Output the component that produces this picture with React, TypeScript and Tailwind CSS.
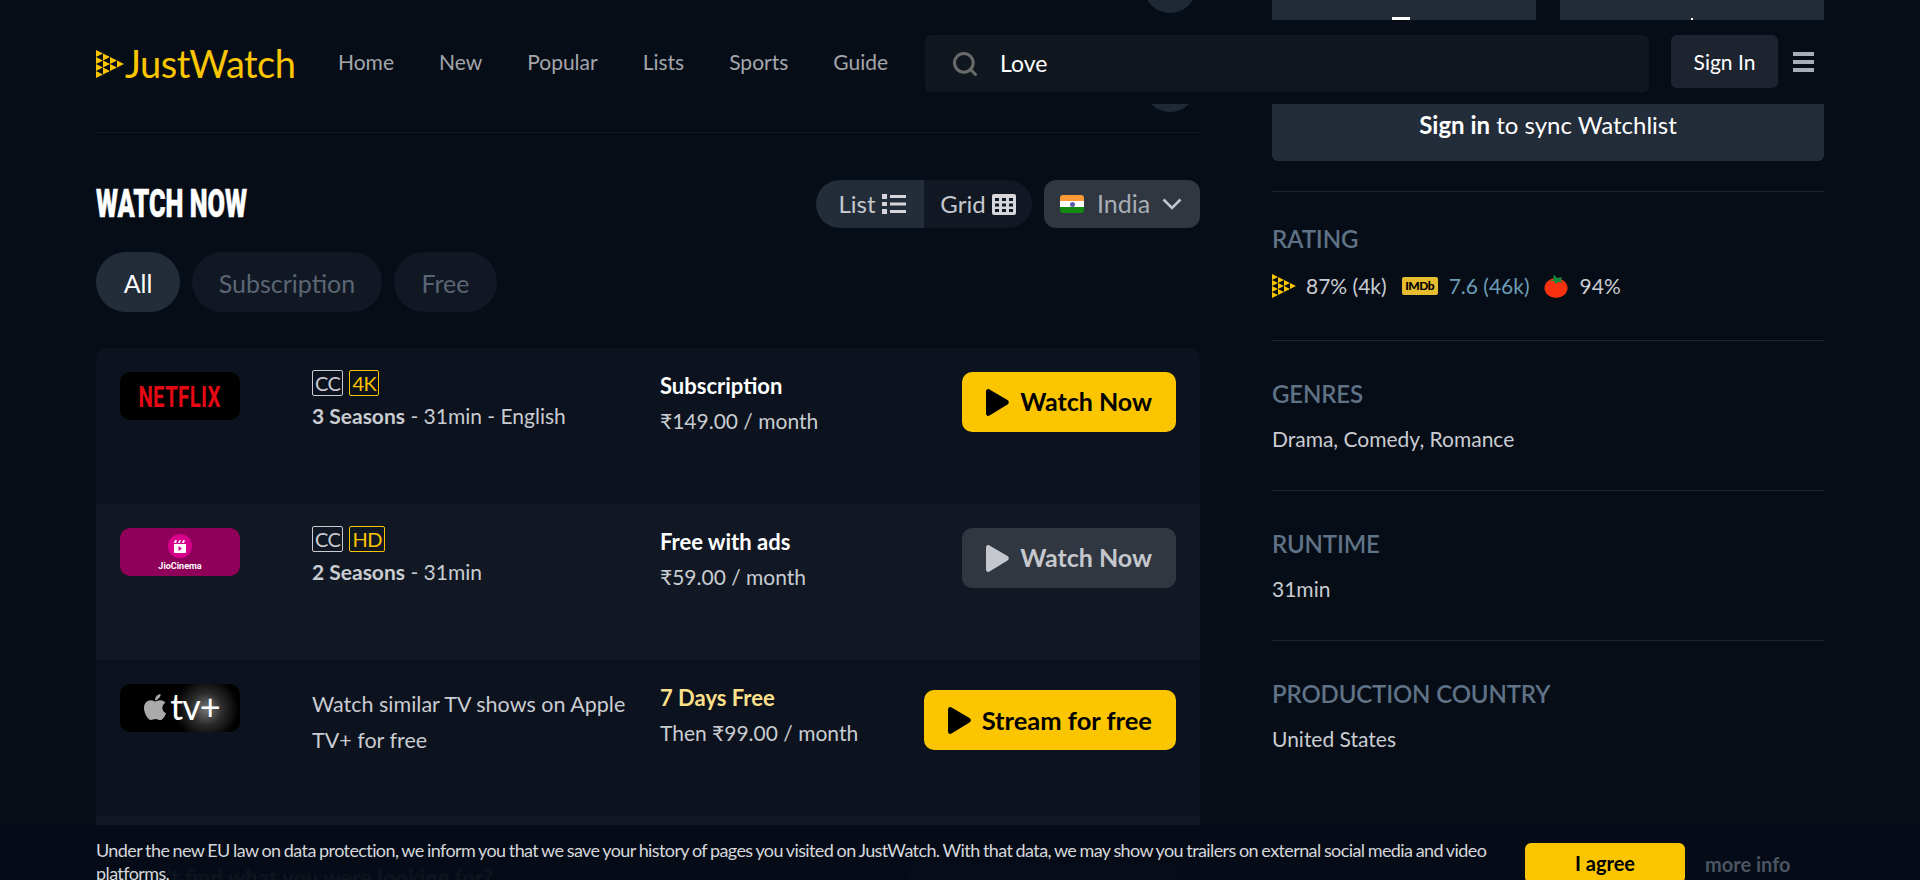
import { Search } from 'lucide-react';
import { FaApple } from 'react-icons/fa';

function BrandMark({ size = 28 }: { size?: number }) {
  // stacked triangles of the JustWatch play mark
  const tris = [
    [0, 0], [0, 7], [0, 14], [0, 21],
    [7, 3.5], [7, 10.5], [7, 17.5],
    [14, 7], [14, 14],
    [21, 10.5],
  ];
  return (
    <svg width={size} height={size} viewBox="0 0 28 28" className="shrink-0">
      {tris.map(([x, y]) => (
        <path key={`${x}-${y}`} d={`M${x} ${y}l7 3.500-7 3.500z`} fill="#fbc500" />
      ))}
    </svg>
  );
}

function PlayIcon({ className }: { className: string }) {
  return (
    <svg width="23" height="27" viewBox="0 0 23 27" className={className}>
      <path d="M0 2.500C0 .5 1.800-.5 3.500.5l18 10.500c1.700 1 1.700 3.600 0 4.600l-18 10.900C1.800 27.500 0 26.500 0 24.500z" fill="currentColor" />
    </svg>
  );
}

function ListIcon() {
  return (
    <svg width="24" height="20" viewBox="0 0 24 20" className="text-[#d5d5db]">
      <path d="M0 0h5v5H0zM0 8h5v4H0zM0 15h5v5H0zM8 1h16v3H8zM8 8.500h16v3H8zM8 16h16v3H8z" fill="currentColor" />
    </svg>
  );
}

function GridIcon() {
  return (
    <svg width="24" height="21" viewBox="0 0 24 21" className="text-[#d5d5db]">
      <path
        fillRule="evenodd"
        d="M2 0h20a2 2 0 0 1 2 2v17a2 2 0 0 1-2 2H2a2 2 0 0 1-2-2V2a2 2 0 0 1 2-2zM3 4v3h4V4zm7 0v3h4V4zm7 0v3h4V4zM3 9.500v3h4v-3zm7 0v3h4v-3zm7 0v3h4v-3zM3 15v3h4v-3zm7 0v3h4v-3zm7 0v3h4v-3z"
        fill="currentColor"
      />
    </svg>
  );
}

function IndiaFlag() {
  return (
    <div className="w-6 h-[18px] rounded-[3px] overflow-hidden flex flex-col">
      <div className="flex-1 bg-[#ff9a35]" />
      <div className="flex-1 bg-white flex items-center justify-center">
        <div className="w-[5px] h-[5px] rounded-full bg-[#5a5ea8]" />
      </div>
      <div className="flex-1 bg-[#148a12]" />
    </div>
  );
}

function Tomato() {
  return (
    <svg width="24" height="24" viewBox="0 0 24 24" className="block">
      <ellipse cx="12" cy="14" rx="11.500" ry="10" fill="#f9310f" />
      <path d="M4 6.500l5-.5L10 0.500l3 3.500 5-1-1.500 3.500 3 2-5-.5-3 2-1.500-3z" fill="#0f8a3c" />
    </svg>
  );
}

function Badge({ label, tone }: { label: string; tone: 'gray' | 'gold' }) {
  return (
    <span
      className={
        tone === 'gray'
          ? 'h-[26px] px-[2px] min-w-[31px] flex items-center justify-center rounded-[2px] border border-[#c9ccd1] text-[#c9ccd1] text-[20px] tracking-[-0.5px]'
          : 'h-[26px] px-[2px] min-w-[30px] flex items-center justify-center rounded-[2px] border border-[#fbc500] text-[#fbc500] text-[20px] tracking-[-0.5px]'
      }
    >
      {label}
    </span>
  );
}

function NetflixLogo() {
  return (
    <div className="w-[120px] h-12 rounded-[10px] bg-black flex items-center justify-center">
      <span className="text-[#e50914] text-[30px] font-bold tracking-[0.5px] scale-x-[0.68] font-['Roboto',sans-serif]">NETFLIX</span>
    </div>
  );
}

function JioLogo() {
  return (
    <div className="w-[120px] h-12 rounded-[10px] bg-[#8f0059] flex flex-col items-center pt-[6px]">
      <div className="w-6 h-6 rounded-full bg-[#d7008c] flex items-center justify-center">
        <svg width="12" height="13" viewBox="0 0 12 13">
          <path d="M0 4h12v9H0zM1 0l2 .5L2 3H0zM5 .500l2-.5-1 3H4zM9 0l2 .5-1 2.500H8z" fill="#fff" />
          <path d="M4.500 6v5l3.500-2.500z" fill="#d7008c" />
        </svg>
      </div>
      <span className="text-white text-[9px] leading-[10px] mt-[3px] font-bold font-['Roboto',sans-serif]">JioCinema</span>
    </div>
  );
}

function AppleTvLogo() {
  return (
    <div className="w-[120px] h-12 rounded-[10px] bg-[radial-gradient(circle_at_72%_52%,#777_0%,#2a2a2a_18%,#000_36%)] flex items-center justify-center">
      <FaApple className="text-[#aaaaaa] text-[30px] -mt-[3px]" />
      <span className="text-white text-[36px] leading-none font-normal -mt-[4px] tracking-[-1px]">tv+</span>
    </div>
  );
}

interface OfferRow {
  logo: React.ReactNode;
  badges?: [string, string];
  boldInfo?: string;
  info: string;
  title: string;
  titleClass: string;
  price: string;
  cta: string;
  muted?: boolean;
  rowClass: string;
}

const offers: OfferRow[] = [
  {
    logo: <NetflixLogo />,
    badges: ['CC', '4K'],
    boldInfo: '3 Seasons',
    info: ' - 31min - English',
    title: 'Subscription',
    titleClass: 'text-white',
    price: '₹149.00 / month',
    cta: 'Watch Now',
    rowClass: 'bg-[#0c121e] rounded-t-[10px]',
  },
  {
    logo: <JioLogo />,
    badges: ['CC', 'HD'],
    boldInfo: '2 Seasons',
    info: ' - 31min',
    title: 'Free with ads',
    titleClass: 'text-white',
    price: '₹59.00 / month',
    cta: 'Watch Now',
    muted: true,
    rowClass: 'bg-[#111823]',
  },
  {
    logo: <AppleTvLogo />,
    info: 'Watch similar TV shows on Apple TV+ for free',
    title: '7 Days Free',
    titleClass: 'text-[#fde08a]',
    price: 'Then ₹99.00 / month',
    cta: 'Stream for free',
    rowClass: 'bg-[#0c121e]',
  },
];

function Offer({ row }: { row: OfferRow }) {
  const hasBadges = !!row.badges;
  return (
    <div className={`h-[156px] pl-6 pr-6 flex items-start ${row.rowClass}`}>
      <div className="w-[192px] pt-6 shrink-0">{row.logo}</div>
      <div className={hasBadges ? 'w-[348px] pt-[22px] shrink-0' : 'w-[348px] pt-[26px] pr-[20px] shrink-0'}>
        {row.badges && (
          <div className="flex gap-[6px]">
            <Badge label={row.badges[0]} tone="gray" />
            <Badge label={row.badges[1]} tone="gold" />
          </div>
        )}
        <p className={hasBadges ? 'text-[21px] leading-9 text-[#c9ccd1] mt-[2px]' : 'text-[21.500px] leading-9 text-[#c9ccd1]'}>
          {row.boldInfo && <b className="font-bold">{row.boldInfo}</b>}
          {row.info}
        </p>
      </div>
      <div className="pt-6 flex-1">
        <p className={`text-[22px] leading-7 font-bold ${row.titleClass}`}>{row.title}</p>
        <p className="text-[21px] leading-7 mt-[7px] text-[#c9ccd1]">{row.price}</p>
      </div>
      <button
        className={
          row.muted
            ? 'h-[60px] mt-6 px-6 rounded-[10px] bg-[#303741] text-[#c5c7cd] flex items-center gap-[11px] text-[25px] font-bold'
            : hasBadges
              ? 'h-[60px] mt-6 px-6 rounded-[10px] bg-[#fbc500] text-black flex items-center gap-[11px] text-[25px] font-bold'
              : 'h-[60px] mt-[30px] px-6 rounded-[10px] bg-[#fbc500] text-black flex items-center gap-[11px] text-[25.500px] font-bold'
        }
      >
        <PlayIcon className="shrink-0" />
        {row.cta}
      </button>
    </div>
  );
}

function SideSection({ label, first, children }: { label: string; first?: boolean; children: React.ReactNode }) {
  return (
    <section className={first ? 'border-t border-[#1c2430] pt-[32px] h-[149px]' : 'border-t border-[#1c2430] pt-[38px] h-[150px]'}>
      <h3 className="text-[24px] leading-[30px] font-semibold tracking-[-0.15px] text-[#5f7286]">{label}</h3>
      <div className={first ? 'mt-[17px] text-[21px] leading-[30px] text-[#c9ccd1]' : 'mt-[15px] text-[21px] leading-[30px] text-[#c9ccd1]'}>{children}</div>
    </section>
  );
}

export default function App() {
  const nav = ['Home', 'New', 'Popular', 'Lists', 'Sports', 'Guide'];

  return (
    <div className="relative h-[880px] overflow-hidden bg-[#060d17] font-['Lato',sans-serif] px-24">
      {/* scrolled-away bits above the sticky header */}
      <div className="h-5 grid grid-cols-[1104px_552px] gap-x-[72px]">
        <div className="flex justify-end pr-[4px]">
          <div className="w-[52px] h-[13px] overflow-hidden">
            <div className="w-[52px] h-[52px] rounded-full bg-[#1f2935] -mt-[39px]" />
          </div>
        </div>
        <div className="grid grid-cols-2 gap-6">
          <div className="h-5 bg-[#232c39] flex items-end justify-center pr-[6px]">
            <div className="w-[18px] h-[3px] bg-white" />
          </div>
          <div className="h-5 bg-[#232c39] flex items-end justify-center">
            <div className="w-[2px] h-[2px] bg-white" />
          </div>
        </div>
      </div>

      <header className="h-[84px] pt-[15px] flex items-start">
        <a className="flex items-center h-[57px] gap-[1px] w-[200px] shrink-0">
          <BrandMark />
          <span className="text-[#fbc500] text-[38px] leading-none tracking-[-0.5px] -mt-[2px]">JustWatch</span>
        </a>
        <nav className="flex gap-[45px] ml-[42px] h-[53px] items-center w-[587px] shrink-0">
          {nav.map((item) => (
            <span key={item} className="text-[21px] text-[#a3a6ab]">
              {item}
            </span>
          ))}
        </nav>
        <div className="w-[724px] h-[57px] rounded-[6px] bg-[#10171f] flex items-center shrink-0">
          <Search className="ml-[26px] w-[28px] h-[28px] text-[#6a6a6a]" strokeWidth={2.6} />
          <span className="ml-[21px] text-[23px] text-white">Love</span>
        </div>
        <button className="ml-[22px] w-[107px] h-[53px] rounded-[6px] bg-[#1d2430] text-white text-[21px]">Sign In</button>
        <div className="ml-[15px] mt-[17px] w-[21px] flex flex-col gap-[4px]">
          <div className="h-1 bg-[#a9adb3]" />
          <div className="h-1 bg-[#a9adb3]" />
          <div className="h-1 bg-[#a9adb3]" />
        </div>
      </header>

      <div className="grid grid-cols-[1104px_552px] gap-x-[72px]">
        <main>
          <div className="flex justify-end pr-[4px]">
            <div className="w-[52px] h-2 overflow-hidden">
              <div className="w-[52px] h-[52px] rounded-full bg-[#1f2935] -mt-[44px]" />
            </div>
          </div>
          <div className="mt-5 border-t border-[#111823]" />

          <div className="mt-[47px] flex items-center justify-between">
            <h2 className="text-[39px] leading-none font-black text-white scale-x-[0.65] origin-left font-['Roboto',sans-serif] [-webkit-text-stroke:0.5px_white]">WATCH NOW</h2>
            <div className="flex gap-3">
              <div className="flex h-12 rounded-full overflow-hidden text-[24px] text-[#c5c7cd]">
                <div className="w-[108px] bg-[#232c39] flex items-center justify-center gap-[6px] pl-1">
                  List <ListIcon />
                </div>
                <div className="w-[108px] bg-[#111823] flex items-center justify-center gap-[6px]">
                  Grid <GridIcon />
                </div>
              </div>
              <div className="w-[156px] h-12 rounded-[12px] bg-[#303741] flex items-center pl-4 text-[25px] text-[#a9adb5]">
                <IndiaFlag />
                <span className="ml-[13px]">India</span>
                <svg width="20" height="12" viewBox="0 0 20 12" className="ml-[12px]">
                  <path d="M1.500 1.500L10 10l8.500-8.500" fill="none" stroke="#c5c7cd" strokeWidth="2.500" />
                </svg>
              </div>
            </div>
          </div>

          <div className="mt-6 flex gap-3 text-[25px]">
            <span className="w-[84px] h-[60px] pt-[3px] rounded-full bg-[#232c39] text-white flex items-center justify-center">All</span>
            <span className="w-[190px] h-[60px] pt-[3px] rounded-full bg-[#111823] text-[#5b6675] flex items-center justify-center">Subscription</span>
            <span className="w-[103px] h-[60px] pt-[3px] rounded-full bg-[#111823] text-[#5b6675] flex items-center justify-center">Free</span>
          </div>

          <div className="mt-9">
            {offers.map((row) => (
              <Offer key={row.cta + row.title} row={row} />
            ))}
            <div className="h-[9px] bg-[#111823]" />
            <div className="h-[60px] flex items-start justify-between pl-[24px] pr-6 pt-[39px]">
              <span className="text-[22px] font-bold text-[#3a4048] -mt-[3px]">Didn't find what you were looking for?</span>
              <div className="w-[267px] h-10 rounded-[10px] bg-[#111823]" />
            </div>
          </div>
        </main>

        <aside>
          <button className="w-full h-[57px] rounded-b-[6px] bg-[#232c39] text-[24px] text-white pb-[16px]">
            <b className="font-bold">Sign in</b> to sync Watchlist
          </button>
          <div className="mt-[30px]">
            <SideSection label="RATING" first>
              <div className="flex items-center">
                <BrandMark size={24} />
                <span className="ml-[10px]">87% (4k)</span>
                <span className="ml-[15px] w-9 h-[18px] rounded-[2px] bg-[#e6bd2f] text-black text-[12px] font-black tracking-[-0.5px] flex items-center justify-center">IMDb</span>
                <span className="ml-[11px] text-[#6d9db6]">7.6 (46k)</span>
                <span className="ml-[14px]">
                  <Tomato />
                </span>
                <span className="ml-[12px]">94%</span>
              </div>
            </SideSection>
            <SideSection label="GENRES">Drama, Comedy, Romance</SideSection>
            <SideSection label="RUNTIME">31min</SideSection>
            <SideSection label="PRODUCTION COUNTRY">United States</SideSection>
          </div>
        </aside>
      </div>

      {/* cookie notice sits over the page */}
      <div className="absolute left-0 right-0 bottom-0 h-[55px] bg-[#060d17]/85 pl-24 flex items-start">
        <p className="w-[1400px] text-[18px] leading-[23px] text-[#d5d7db] tracking-[-0.6px] [word-spacing:-0.700px] pt-[14px]">
          Under the new EU law on data protection, we inform you that we save your history of pages you visited on JustWatch. With that data, we may show you trailers on external social media and video platforms.
        </p>
        <button className="ml-[29px] mt-[18px] w-[160px] h-10 rounded-[6px] bg-[#fbc500] text-black text-[20px] font-bold">I agree</button>
        <span className="ml-5 mt-[24px] text-[20px] font-bold text-[#4a5462]">more info</span>
      </div>
    </div>
  );
}
